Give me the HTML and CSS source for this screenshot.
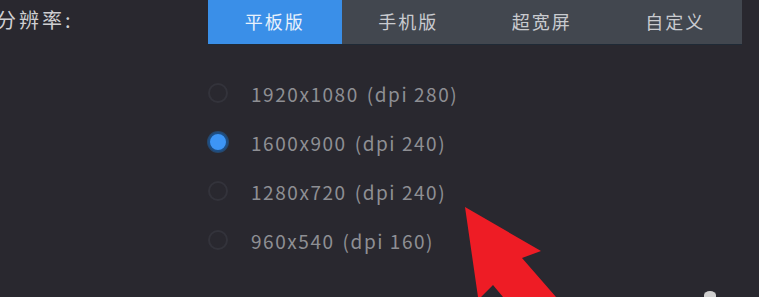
FILE: index.html
```html
<!DOCTYPE html>
<html lang="zh">
<head>
<meta charset="utf-8">
<link rel="stylesheet" href="styles.css">
</head>
<body>
<div class="page">
  <div class="row-top">
    <div class="label">分辨率:</div>
    <div class="tabs">
      <div class="tab active">平板版</div>
      <div class="tab">手机版</div>
      <div class="tab">超宽屏</div>
      <div class="tab">自定义</div>
    </div>
  </div>
  <div class="options">
    <div class="opt"><span class="radio"></span><span class="txt">1920x1080<span class="sp"></span>(dpi 280)</span></div>
    <div class="opt"><span class="radio on"></span><span class="txt">1600x900<span class="sp"></span>(dpi 240)</span></div>
    <div class="opt"><span class="radio"></span><span class="txt">1280x720<span class="sp"></span>(dpi 240)</span></div>
    <div class="opt"><span class="radio"></span><span class="txt">960x540<span class="sp"></span>(dpi 160)</span></div>
  </div>
  <svg class="arrow" width="759" height="297" viewBox="0 0 759 297">
    <polygon points="465,207 541,251 522,258 556,297 503,297 493,285 481,297 478,297" fill="#ee1c25"/>
  </svg>
  <div class="blip"></div>
</div>
</body>
</html>
```

FILE: styles.css
```css
html, body {
  margin: 0;
  padding: 0;
  background: #29282f;
  overflow: hidden;
}
.page {
  position: relative;
  width: 759px;
  height: 297px;
  font-family: "Noto Sans CJK SC", "Noto Sans", sans-serif;
}
.row-top {
  display: flex;
  align-items: flex-start;
  height: 45px;
}
.label {
  flex: 0 0 212px;
  margin-left: -4px;
  padding-top: 6px;
  box-sizing: border-box;
  color: #cfcfd2;
  font-size: 20px;
  letter-spacing: 3px;
  line-height: 28px;
  white-space: nowrap;
}
.tabs {
  display: flex;
  height: 44px;
  border-bottom: 1px solid #1f2a36;
}
.tab {
  width: 133.5px;
  background: #42474f;
  color: #c9cbcf;
  font-size: 18px;
  letter-spacing: 2px;
  display: flex;
  align-items: center;
  justify-content: center;
  padding-bottom: 3px;
  box-sizing: border-box;
}
.tab.active {
  background: #3a8fe8;
  color: #e8f1fc;
}
.options {
  display: flex;
  flex-direction: column;
  gap: 27px;
  padding-left: 208px;
  padding-top: 37px;
}
.opt {
  display: flex;
  align-items: center;
  height: 22px;
}
.radio {
  width: 20px;
  height: 20px;
  border-radius: 50%;
  border: 2px solid #33333b;
  box-sizing: border-box;
  margin-right: 23px;
}
.radio.on {
  border: 2px solid #1d4f86;
  background: #3d95f5;
  box-shadow: 0 0 0 1px #27476b;
}
.txt {
  color: #8e8f94;
  font-size: 19px;
  letter-spacing: 1.55px;
  white-space: nowrap;
}
.sp {
  display: inline-block;
  width: 8px;
}
.arrow {
  position: absolute;
  left: 0;
  top: 0;
}
.blip {
  position: absolute;
  left: 704px;
  top: 291px;
  width: 12px;
  height: 8px;
  border-radius: 50% 50% 0 0;
  background: #cfcfcf;
}
```
